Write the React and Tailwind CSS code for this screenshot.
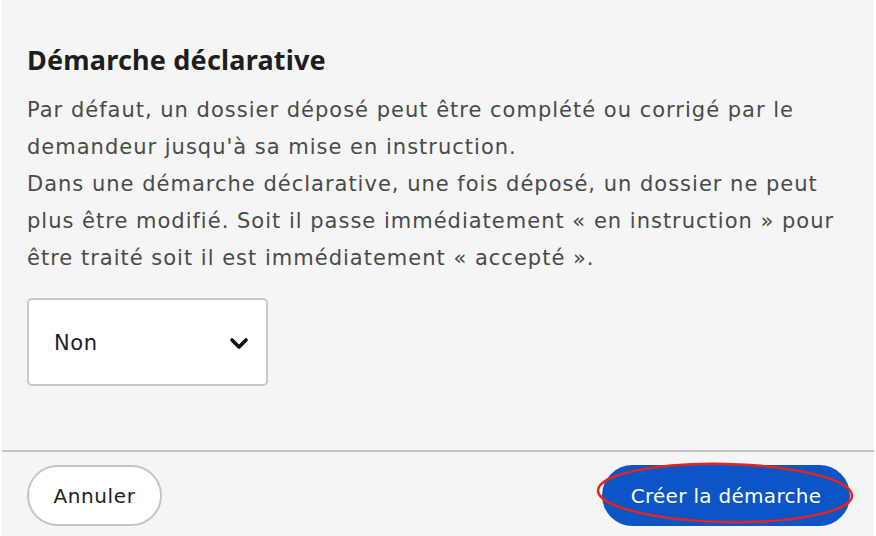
export default function App() {
  const dv = { fontFamily: '"DejaVu Sans", "Noto Sans", sans-serif' };
  return (
    <div className="w-[876px] h-[536px] bg-white overflow-hidden" style={{ fontFamily: '"Noto Sans", "Open Sans", sans-serif' }}>
      <div className="ml-[2px] w-[872px] h-[536px] bg-[#f5f5f5] flex flex-col">
        <div className="pl-[25px] pr-[20px] pt-[40px] h-[452px] border-b-2 border-[#c4c4c4]">
          <h2 className="text-[27px] leading-[40px] font-bold tracking-[0.2px] text-[#1e1e1e]">Démarche déclarative</h2>
          <p className="mt-[12px] text-[21px] leading-[37px] tracking-[1px] text-[#4a4a4a] whitespace-nowrap" style={dv}>
            Par défaut, un dossier déposé peut être complété ou corrigé par le
            <br />
            demandeur jusqu'à sa mise en instruction.
            <br />
            Dans une démarche déclarative, une fois déposé, un dossier ne peut
            <br />
            plus être modifié. Soit il passe immédiatement « en instruction » pour
            <br />
            être traité soit il est immédiatement « accepté ».
          </p>
          <div className="mt-[21px] w-[241px] h-[88px] bg-white border-2 border-[#c8c8c8] rounded-[5px] flex items-center justify-between pl-[25px] pr-[16px] pt-[4px]">
            <span className="text-[21px] tracking-[0.6px] text-[#1e1e1e]" style={dv}>Non</span>
            <svg width="22" height="16" viewBox="0 0 22 16">
              <path d="M4 4 L11 11 L18 4" fill="none" stroke="#111" strokeWidth="3.6" strokeLinecap="round" strokeLinejoin="round" />
            </svg>
          </div>
        </div>
        <div className="relative flex items-center justify-between pl-[25px] pr-[24px] pt-[13px]">
          <button className="w-[135px] h-[61px] rounded-full bg-white border-2 border-[#c4c4c4] text-[20px] tracking-[0.6px] text-[#1e1e1e]" style={dv}>Annuler</button>
          <button className="w-[248px] h-[61px] rounded-full bg-[#0c55c6] text-[20px] tracking-[0.3px] text-white" style={dv}>Créer la démarche</button>
          <svg className="absolute left-[593px] top-[10px]" width="262" height="66" viewBox="0 0 262 66">
            <ellipse cx="130" cy="31" rx="127" ry="29" fill="none" stroke="#e8231a" strokeWidth="2.5" transform="rotate(1.2 130 31)" />
          </svg>
        </div>
      </div>
    </div>
  );
}
